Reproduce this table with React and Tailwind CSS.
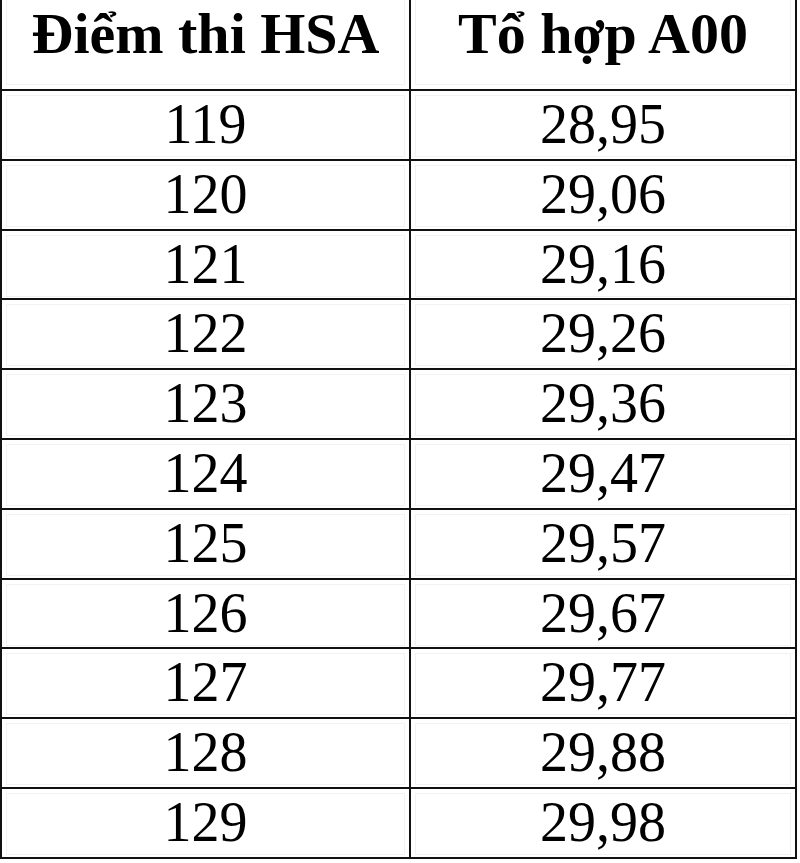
const rows = [
  ['119', '28,95'],
  ['120', '29,06'],
  ['121', '29,16'],
  ['122', '29,26'],
  ['123', '29,36'],
  ['124', '29,47'],
  ['125', '29,57'],
  ['126', '29,67'],
  ['127', '29,77'],
  ['128', '29,88'],
  ['129', '29,98'],
];

function Cell({ children, head, right }) {
  return (
    <div className={`${head ? 'pt-0 px-[4px] pb-[4px]' : 'p-[4px]'} ${right ? 'border-l-2 border-[#111]' : ''}`}>
      <div
        className={`h-full border border-[#f2f2f2] flex justify-center ${
          head ? 'border-t-0 items-start pt-[5px] text-[58px] font-bold' : 'items-center pb-[4px] text-[56px]'
        } leading-none`}
      >
        {children}
      </div>
    </div>
  );
}

export default function App() {
  return (
    <div className="w-[800px] h-[863px] bg-white overflow-hidden font-['Liberation_Serif','Times_New_Roman',serif] text-black">
      <div className="w-[797px] border-x-2 border-b-2 border-[#111]">
        {/* Header */}
        <div className="grid grid-cols-[407px_1fr] h-[91px] border-b-2 border-[#111]">
          <Cell head>Điểm thi HSA</Cell>
          <Cell head right>Tổ hợp A00</Cell>
        </div>

        {/* Rows */}
        {rows.map(([score, a00], i) => (
          <div
            key={score}
            className={`grid grid-cols-[407px_1fr] ${
              i < rows.length - 1 ? 'h-[69.8px] border-b-2 border-[#111]' : 'h-[67.8px]'
            }`}
          >
            <Cell>{score}</Cell>
            <Cell right>{a00}</Cell>
          </div>
        ))}
      </div>
    </div>
  );
}
